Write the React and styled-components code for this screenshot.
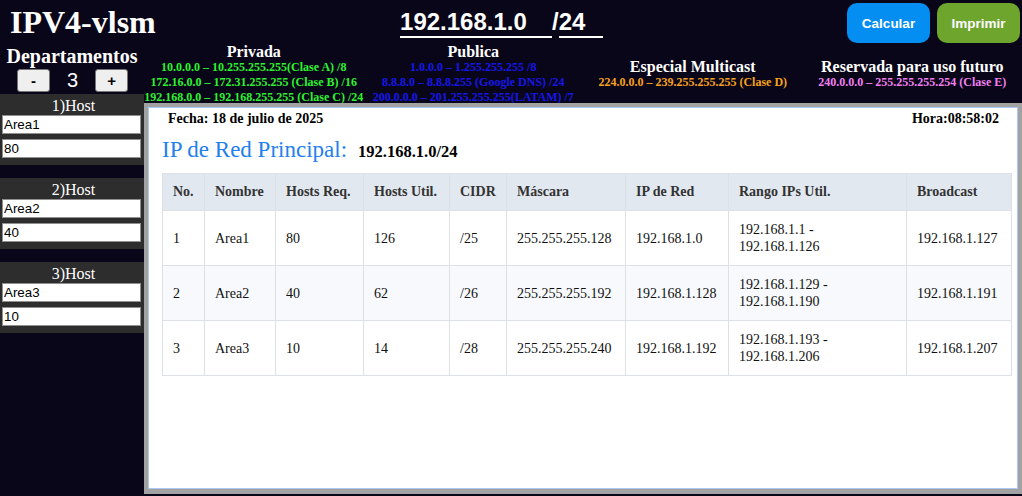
import React from "react";
import styled, { createGlobalStyle } from "styled-components";

const GlobalStyle = createGlobalStyle`
  html, body { margin: 0; padding: 0; }
  body {
    background: #0a0619;
    font-family: "Liberation Serif", "Times New Roman", serif;
    color: #fff;
    height: 496px;
    overflow: hidden;
  }
  * { box-sizing: border-box; }
`;

const Page = styled.div`
  width: 1022px;
  height: 496px;
  display: flex;
  flex-direction: column;
`;

const TopBar = styled.header`
  height: 45px;
  display: flex;
  align-items: center;
  justify-content: space-between;
  padding: 0 2px 0 10px;
`;

const Title = styled.h1`
  margin: 0;
  font-size: 32px;
  font-weight: bold;
  line-height: 1.15;
  color: #fff;
`;

const IpGroup = styled.div`
  display: flex;
  align-items: baseline;
  font-family: "Liberation Sans", Arial, sans-serif;
  font-size: 24px;
  font-weight: bold;
`;

const IpInput = styled.input`
  width: ${(p) => p.$w}px;
  padding: 0;
  border: none;
  border-bottom: 2px solid #fff;
  background: transparent;
  color: #fff;
  font: inherit;
  outline: none;
`;

const Slash = styled.span`
  color: #fff;
`;

const Actions = styled.div`
  display: flex;
  gap: 7px;
  padding-top: 1px;
`;

const ActionButton = styled.button`
  width: 83px;
  height: 40px;
  border: none;
  border-radius: 10px;
  background: ${(p) => p.$bg};
  color: #fff;
  font-family: "Liberation Sans", Arial, sans-serif;
  font-size: 13.5px;
  font-weight: bold;
  cursor: pointer;
`;

const Body = styled.div`
  flex: 1;
  display: flex;
  min-height: 0;
`;

const Sidebar = styled.aside`
  width: 144px;
  flex: none;
  display: flex;
  flex-direction: column;
`;

const DeptHeader = styled.div`
  height: 49px;
  display: flex;
  flex-direction: column;
  align-items: center;
`;

const DeptTitle = styled.div`
  font-size: 20px;
  font-weight: bold;
  line-height: 23px;
`;

const Counter = styled.div`
  margin-top: 1px;
  display: flex;
  align-items: center;
  gap: 17px;
  padding-left: 1px;
`;

const StepButton = styled.button`
  width: 33px;
  height: 23px;
  padding: 0;
  background: #efefef;
  border: 1px solid #767676;
  border-radius: 3px;
  color: #000;
  font-family: "Liberation Sans", Arial, sans-serif;
  font-size: 15px;
  font-weight: bold;
  line-height: 1;
`;

const CountValue = styled.span`
  font-family: "Liberation Sans", Arial, sans-serif;
  font-size: 20px;
  min-width: 11px;
  text-align: center;
`;

const HostList = styled.div`
  display: flex;
  flex-direction: column;
  gap: 13px;
`;

const HostCard = styled.div`
  background: #2d2d2d;
  padding: 2px 3px 7px 2px;
  display: flex;
  flex-direction: column;
  gap: 5px;
`;

const HostTitle = styled.div`
  text-align: center;
  font-size: 16px;
  line-height: 19px;
  margin-bottom: -5px;
  padding-left: 4px;
`;

const HostInput = styled.input`
  width: 100%;
  height: 19px;
  padding: 0 1px;
  border: 1px solid #8f8f8f;
  background: #fff;
  color: #000;
  font-family: "Liberation Sans", Arial, sans-serif;
  font-size: 13.33px;
  outline: none;
`;

const Main = styled.main`
  flex: 1;
  display: flex;
  flex-direction: column;
  min-width: 0;
`;

const InfoRow = styled.div`
  height: 58px;
  display: flex;
  align-items: center;
`;

const InfoColumn = styled.div`
  flex: 1;
  text-align: center;
  white-space: nowrap;
`;

const InfoTitle = styled.div`
  font-size: 16px;
  font-weight: bold;
  line-height: 17px;
  color: #fff;
`;

const InfoLine = styled.div`
  font-size: 12px;
  font-weight: bold;
  line-height: 15px;
  color: ${(p) => p.$color};
`;

const Frame = styled.div`
  height: 391px;
  background: #a2a2a2;
  padding: 4px 4px 5px 4px;
`;

const Sheet = styled.section`
  height: 100%;
  background: #fff;
  border: 1px solid #a9c9f2;
  padding: 3px 5px 0 13px;
  color: #000;
`;

const MetaRow = styled.div`
  display: flex;
  justify-content: space-between;
  font-size: 14px;
  font-weight: bold;
  line-height: 16px;
  padding: 0 13px 0 6px;
`;

const Heading = styled.div`
  display: flex;
  align-items: baseline;
  gap: 11px;
  margin-top: 10px;
`;

const HeadingLabel = styled.h2`
  margin: 0;
  font-size: 23px;
  font-weight: normal;
  line-height: 26px;
  color: #1f80ee;
`;

const HeadingValue = styled.span`
  font-size: 16.5px;
  font-weight: bold;
`;

const Table = styled.table`
  margin-top: 10px;
  width: 849px;
  border-collapse: collapse;
  table-layout: fixed;
  font-size: 14px;
`;

const Th = styled.th`
  background: #e2e8f0;
  color: #333;
  font-weight: bold;
  text-align: left;
  padding: 10px;
  line-height: 16px;
  border: 1px solid #dde1e6;
`;

const Tr = styled.tr`
  background: ${(p) => (p.$alt ? "#f7f9fc" : "#fff")};
`;

const Td = styled.td`
  padding: 10px;
  line-height: 17px;
  border: 1px solid #dde1e6;
  color: #111;
  vertical-align: middle;
`;

const infoBlocks = [
  {
    title: "Privada",
    color: "#2df22d",
    lines: [
      "10.0.0.0 – 10.255.255.255(Clase A) /8",
      "172.16.0.0 – 172.31.255.255 (Clase B) /16",
      "192.168.0.0 – 192.168.255.255 (Clase C) /24",
    ],
  },
  {
    title: "Publica",
    color: "#1616e8",
    lines: [
      "1.0.0.0 – 1.255.255.255 /8",
      "8.8.8.0 – 8.8.8.255 (Google DNS) /24",
      "200.0.0.0 – 201.255.255.255(LATAM) /7",
    ],
  },
  {
    title: "Especial Multicast",
    color: "#f7a21c",
    lines: ["224.0.0.0 – 239.255.255.255 (Clase D)"],
  },
  {
    title: "Reservada para uso futuro",
    color: "#f080f0",
    lines: ["240.0.0.0 – 255.255.255.254 (Clase E)"],
  },
];

const hosts = [
  { name: "Area1", req: "80" },
  { name: "Area2", req: "40" },
  { name: "Area3", req: "10" },
];

const rows = [
  { no: 1, name: "Area1", req: 80, util: 126, cidr: "/25", mask: "255.255.255.128", net: "192.168.1.0", from: "192.168.1.1", to: "192.168.1.126", bc: "192.168.1.127" },
  { no: 2, name: "Area2", req: 40, util: 62, cidr: "/26", mask: "255.255.255.192", net: "192.168.1.128", from: "192.168.1.129", to: "192.168.1.190", bc: "192.168.1.191" },
  { no: 3, name: "Area3", req: 10, util: 14, cidr: "/28", mask: "255.255.255.240", net: "192.168.1.192", from: "192.168.1.193", to: "192.168.1.206", bc: "192.168.1.207" },
];

const columns = [
  { label: "No.", w: 42 },
  { label: "Nombre", w: 71 },
  { label: "Hosts Req.", w: 88 },
  { label: "Hosts Util.", w: 86 },
  { label: "CIDR", w: 57 },
  { label: "Máscara", w: 119 },
  { label: "IP de Red", w: 103 },
  { label: "Rango IPs Util.", w: 178 },
  { label: "Broadcast", w: 105 },
];

export default function App() {
  return (
    <Page>
      <GlobalStyle />
      <TopBar>
        <Title>IPV4-vlsm</Title>
        <IpGroup>
          <IpInput $w={152} defaultValue="192.168.1.0" />
          <Slash>/</Slash>
          <IpInput $w={44} defaultValue="24" />
        </IpGroup>
        <Actions>
          <ActionButton $bg="#058ef2">Calcular</ActionButton>
          <ActionButton $bg="#6ea52d">Imprimir</ActionButton>
        </Actions>
      </TopBar>
      <Body>
        <Sidebar>
          <DeptHeader>
            <DeptTitle>Departamentos</DeptTitle>
            <Counter>
              <StepButton>-</StepButton>
              <CountValue>3</CountValue>
              <StepButton>+</StepButton>
            </Counter>
          </DeptHeader>
          <HostList>
            {hosts.map((h, i) => (
              <HostCard key={h.name}>
                <HostTitle>{i + 1})Host</HostTitle>
                <HostInput defaultValue={h.name} />
                <HostInput defaultValue={h.req} />
              </HostCard>
            ))}
          </HostList>
        </Sidebar>
        <Main>
          <InfoRow>
            {infoBlocks.map((b) => (
              <InfoColumn key={b.title}>
                <InfoTitle>{b.title}</InfoTitle>
                {b.lines.map((l) => (
                  <InfoLine key={l} $color={b.color}>{l}</InfoLine>
                ))}
              </InfoColumn>
            ))}
          </InfoRow>
          <Frame>
            <Sheet>
              <MetaRow>
                <span>Fecha: 18 de julio de 2025</span>
                <span>Hora:08:58:02</span>
              </MetaRow>
              <Heading>
                <HeadingLabel>IP de Red Principal:</HeadingLabel>
                <HeadingValue>192.168.1.0/24</HeadingValue>
              </Heading>
              <Table>
                <colgroup>
                  {columns.map((c) => (
                    <col key={c.label} style={{ width: c.w }} />
                  ))}
                </colgroup>
                <thead>
                  <tr>
                    {columns.map((c) => (
                      <Th key={c.label}>{c.label}</Th>
                    ))}
                  </tr>
                </thead>
                <tbody>
                  {rows.map((r, i) => (
                    <Tr key={r.no} $alt={i % 2 === 1}>
                      <Td>{r.no}</Td>
                      <Td>{r.name}</Td>
                      <Td>{r.req}</Td>
                      <Td>{r.util}</Td>
                      <Td>{r.cidr}</Td>
                      <Td>{r.mask}</Td>
                      <Td>{r.net}</Td>
                      <Td>
                        {r.from} -<br />
                        {r.to}
                      </Td>
                      <Td>{r.bc}</Td>
                    </Tr>
                  ))}
                </tbody>
              </Table>
            </Sheet>
          </Frame>
        </Main>
      </Body>
    </Page>
  );
}
